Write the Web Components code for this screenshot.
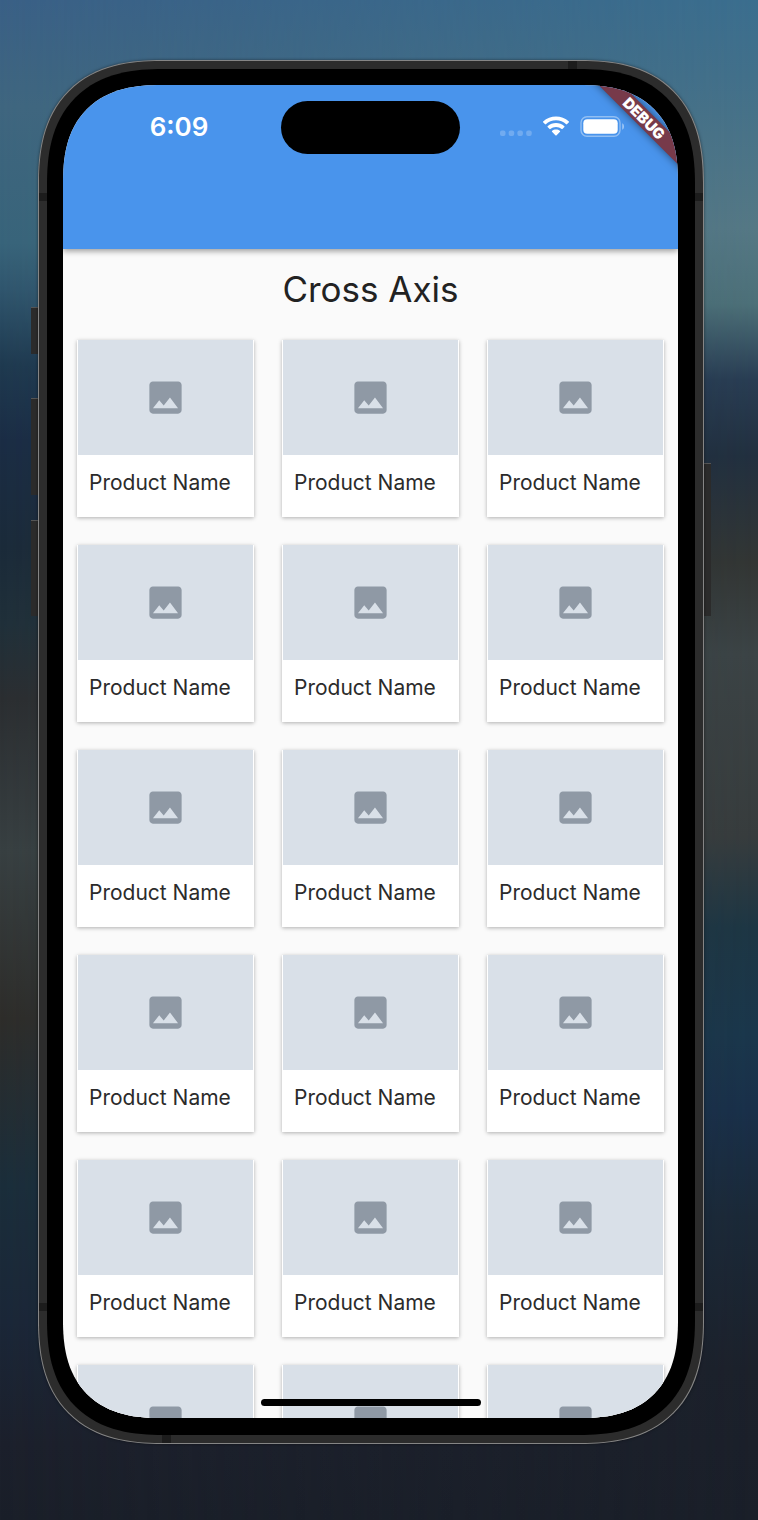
<!DOCTYPE html>
<html lang="en">
<head>
<meta charset="utf-8">
<meta name="viewport" content="width=device-width, initial-scale=1">
<title>Cross Axis</title>
<style>
  body { margin: 0; font-family: Inter, "Open Sans", sans-serif; }
</style>
</head>
<body>
<phone-stage>
  <phone-frame>
    <app-bar>
      <status-bar>6:09</status-bar>
    </app-bar>
    <product-grid heading="Cross Axis" count="18" label="Product Name"></product-grid>
    <debug-banner slot="overlay">DEBUG</debug-banner>
  </phone-frame>
</phone-stage>
<script>
const define = (name, html, setup) => {
  const template = document.createElement('template');
  template.innerHTML = html;
  customElements.define(name, class extends HTMLElement {
    constructor() {
      super();
      this.attachShadow({ mode: 'open' }).append(template.content.cloneNode(true));
    }
    connectedCallback() { if (setup) setup(this, this.shadowRoot); }
  });
};

define('phone-stage', `
  <style>
    :host {
      display: grid; box-sizing: border-box; height: 100vh; position: relative; isolation: isolate;
      padding: 60px 54px 76px 38px;
      background: linear-gradient(#3a6086 0, #3f667f 7%, #38647a 16%, #30566e 19%, #1f3a50 24%, #1b2d45 29%,
        #1b2b3a 36%, #20303a 41%, #2b2e31 46%, #384042 56%, #2e2d2a 67%, #1b2e3b 78%, #1b2738 87%, #1c202c 95%, #1a1f29);
    }
    :host::before {
      content: ""; position: absolute; inset: 0; z-index: -1;
      background: linear-gradient(#3b6e8e 0, #42708a 5%, #557885 15%, #4d7078 20%, #293d53 25%, #22303f 30%,
        #333634 37%, #3c4446 43%, #373c3d 55%, #1d3644 61%, #1a374c 68%, #19304a 73%, #1b2938 80%, #1c212b 90%, #1a1f29);
      -webkit-mask-image: linear-gradient(90deg, transparent, #000);
      mask-image: linear-gradient(90deg, transparent, #000);
    }
  </style>
  <slot></slot>`);

define('phone-frame', `
  <style>
    :host { display: grid; position: relative; min-height: 0; }
    .body {
      display: grid; min-height: 0; box-sizing: border-box; position: relative;
      border: 1px solid #858585; border-radius: 104px; background: #2c2c2c; padding: 8px;
      box-shadow: 0 0 3px rgba(0, 0, 0, .5);
    }
    .bezel { display: grid; min-height: 0; background: #000; border-radius: 96px; padding: 16px 17px 17px 16px; position: relative; }
    .screen {
      display: flex; flex-direction: column; min-height: 0; overflow: hidden;
      position: relative; background: #fafafa; border-radius: 80px;
    }
    @supports (corner-shape: superellipse(1.3)) {
      .body, .bezel, .screen { corner-shape: superellipse(1.3); }
      .body { border-radius: 124px; }
      .bezel { border-radius: 116px; }
      .screen { border-radius: 98px; }
    }
    .key { position: absolute; width: 7px; background: #2b2b2b; border-top: 1px solid #555; box-sizing: border-box; }
    .left { right: 100%; }
    .right { left: 100%; }
    .silence { top: 247px; height: 47px; }
    .up { top: 338px; height: 97px; }
    .down { top: 460px; height: 96px; }
    .power { top: 403px; height: 153px; }
    .seam { position: absolute; background: #1c1c1c; }
    .side { width: 8px; height: 8px; }
    .s1, .s3 { left: 0; } .s2, .s4 { right: 0; }
    .s1, .s2 { top: 132px; } .s3, .s4 { bottom: 132px; }
    .edge { width: 9px; height: 8px; }
    .s5 { top: 0; right: 126px; } .s6 { bottom: 0; left: 123px; }
    .home { position: absolute; bottom: 12px; left: 0; right: 0; margin: auto; width: 220px; height: 7px; border-radius: 4px; background: #000; }
  </style>
  <span class="key left silence"></span><span class="key left up"></span>
  <span class="key left down"></span><span class="key right power"></span>
  <div class="body">
    <span class="seam side s1"></span><span class="seam side s2"></span>
    <span class="seam side s3"></span><span class="seam side s4"></span>
    <span class="seam edge s5"></span><span class="seam edge s6"></span>
    <div class="bezel">
      <div class="screen">
        <slot></slot>
        <slot name="overlay"></slot>
        <span class="home"></span>
      </div>
    </div>
  </div>`);

define('app-bar', `
  <style>
    :host {
      display: block; flex: none; box-sizing: border-box; height: 164px; padding-top: 16px; position: relative;
      background: #4994ec; box-shadow: 0 2px 6px rgba(0, 0, 0, .4);
    }
  </style>
  <header><slot></slot></header>`);

define('status-bar', `
  <style>
    :host { display: grid; grid-template-columns: 1fr 179px 1fr; align-items: center; color: #fff; }
    .time { text-align: center; padding: 0 0 2px 14px; font-size: 26px; line-height: 32px; font-weight: 600; }
    .island { height: 53px; border-radius: 27px; background: #000; }
    .icons { display: flex; justify-content: flex-end; align-items: center; gap: 10px; padding: 0 53px 2px 0; }
    svg { display: block; fill: #fff; }
  </style>
  <span class="time"><slot></slot></span>
  <span class="island"></span>
  <span class="icons">
    <svg width="32" height="20" viewBox="0 0 32 20" aria-hidden="true">
      <g opacity=".22"><rect y="13.500" width="5.500" height="5.500" rx="2"/><rect x="8.700" y="13.500" width="5.500" height="5.500" rx="2"/><rect x="17.400" y="13.500" width="5.500" height="5.500" rx="2"/><rect x="26.200" y="13.500" width="5.500" height="5.500" rx="2"/></g>
    </svg>
    <svg width="28" height="21" viewBox="0 0 28 21" aria-hidden="true">
      <path d="M14 4.200c3.900 0 7.500 1.500 10.200 4.100.2.200.5.200.7 0l2-2c.2-.2.200-.6 0-.8C19.700-1.300 8.300-1.300 1.100 5.500c-.2.200-.2.600 0 .8l2 2c.2.200.5.200.7 0C6.500 5.700 10.100 4.200 14 4.200z"/>
      <path d="M14 10.900c2.100 0 4.100.8 5.700 2.200.2.200.5.200.7 0l2-2c.2-.2.200-.6 0-.8-4.700-4.400-12.100-4.400-16.800 0-.2.200-.2.600 0 .8l2 2c.2.200.5.200.7 0 1.600-1.400 3.600-2.200 5.700-2.200z"/>
      <path d="M18 15.800c.2-.2.200-.6 0-.8-2.300-1.900-5.700-1.900-8 0-.2.200-.2.600 0 .8l3.600 3.600c.2.200.6.200.8 0z"/>
    </svg>
    <svg width="45" height="21" viewBox="0 0 45 21" aria-hidden="true">
      <rect x="1" y=".700" width="39" height="19.600" rx="6" fill="none" stroke="#fff" stroke-opacity=".4" stroke-width="1.400"/>
      <rect x="3.300" y="3.300" width="34.400" height="14.400" rx="4"/>
      <path d="M42.200 7.200v6.600c2.500-1 2.500-5.600 0-6.600z" opacity=".45"/>
    </svg>
  </span>`);

define('product-grid', `
  <style>
    :host { display: block; flex: 1; min-height: 0; }
    h1 { margin: 0; padding: 16px 0 27px; text-align: center; font-size: 35px; line-height: 48px; font-weight: 400; color: #222; }
    .grid { display: grid; grid-template-columns: repeat(3, 1fr); gap: 28px; padding: 0 14px; }
  </style>
  <main><h1></h1><div class="grid"></div></main>`,
  (host, root) => {
    root.querySelector('h1').textContent = host.getAttribute('heading');
    const cards = Array.from({ length: Number(host.getAttribute('count')) }, () => {
      const card = document.createElement('product-card');
      card.textContent = host.getAttribute('label');
      return card;
    });
    root.querySelector('.grid').replaceChildren(...cards);
  });

define('product-card', `
  <style>
    :host {
      display: flex; flex-direction: column; aspect-ratio: 1; min-width: 0; box-sizing: border-box; padding: 0 1px;
      background: #fff; box-shadow: 0 1px 4px rgba(0, 0, 0, .3);
    }
    .picture { flex: 1; display: grid; place-items: center; background: #d9e0e8; }
    svg { display: block; fill: #8f99a5; }
    .name { padding: 12px 11px 18px; font-size: 21px; line-height: 32px; color: #2b2b2b; white-space: nowrap; }
  </style>
  <div class="picture">
    <svg width="43" height="43" viewBox="0 0 24 24" aria-hidden="true">
      <path d="M21 19V5c0-1.100-.9-2-2-2H5c-1.100 0-2 .9-2 2v14c0 1.100.9 2 2 2h14c1.100 0 2-.9 2-2zM8.500 13.500l2.500 3.010L14.500 12l4.500 6H5l3.500-4.500z"/>
    </svg>
  </div>
  <div class="name"><slot></slot></div>`);

define('debug-banner', `
  <style>
    :host {
      display: block; position: absolute; top: 25px; right: -36px; width: 140px; height: 17px; transform: rotate(45deg);
      background: #773a4a; box-shadow: 0 0 8px rgba(0, 0, 0, .5);
      color: #fff; text-align: center; font-size: 15px; line-height: 17px; font-weight: 900;
    }
  </style>
  <slot></slot>`);
</script>
</body>
</html>
